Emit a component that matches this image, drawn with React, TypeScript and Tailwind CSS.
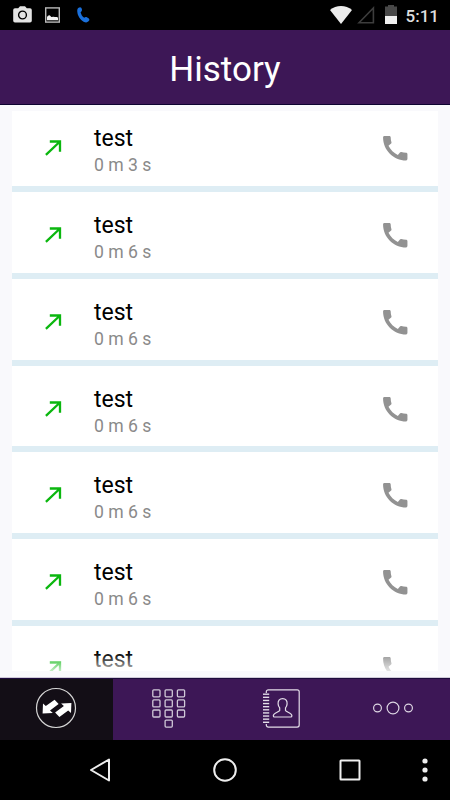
import type { ReactNode } from "react"
import { MdCall } from "react-icons/md"

type Call = { id: number; name: string; duration?: string }

const calls: Call[] = [
  { id: 1, name: "test", duration: "0 m 3 s" },
  { id: 2, name: "test", duration: "0 m 6 s" },
  { id: 3, name: "test", duration: "0 m 6 s" },
  { id: 4, name: "test", duration: "0 m 6 s" },
  { id: 5, name: "test", duration: "0 m 6 s" },
  { id: 6, name: "test", duration: "0 m 6 s" },
  { id: 7, name: "test" },
]

function StatusBar() {
  return (
    <div className="flex h-[30px] shrink-0 items-center justify-between bg-black pl-[13px] pr-[11px]">
      <div className="flex items-center pb-[1px]">
        {/* Camera */}
        <svg width="19" height="17" viewBox="0 0 19 17" fill="none">
          <path d="M2 2.200h3.200L7 .2h5l1.800 2H17A1.800 1.800 0 0 1 18.800 4v10.800a1.800 1.800 0 0 1-1.800 1.800H2a1.800 1.800 0 0 1-1.800-1.800V4A1.800 1.800 0 0 1 2 2.200z" fill="#e4e4e4" />
          <circle cx="9.500" cy="9" r="3.900" stroke="#000" strokeWidth="1.400" />
        </svg>
        {/* Picture */}
        <svg className="ml-[13px]" width="15" height="16" viewBox="0 0 15 16">
          <rect x=".7" y=".9" width="13.600" height="14.200" fill="none" stroke="#b9b9b9" strokeWidth="1.400" />
          <path d="M2 13.200V10.200C3 8.400 4.400 7.600 5.600 9.200c1.200 1.300 2 .6 2.900.6 1.300 0 2 .4 2.900.2.700-.2 1.200.1 1.600.8v2.400z" fill="#f2f2f2" />
        </svg>
        {/* Active call */}
        <svg className="ml-[16.500px]" width="13" height="16" viewBox="0 0 13 16">
          <path d="M1.600.8C3.100-.2 4.600.3 4.900 2.300c.3 1.900-.4 2.400-1.300 3 .5 2.200 1.700 4.300 3.600 5.500.9-.8 1.600-1.100 3-.4 1.900.9 2.700 2 1.900 3.200-1 1.700-3 2.300-5.100 1.300C3 12.900.6 8.500.3 4.700.1 2.600.4 1.600 1.600.8z" fill="#1a70dc" />
        </svg>
      </div>
      <div className="flex items-center">
        {/* Wifi */}
        <svg width="22" height="18" viewBox="0 0 22 18">
          <path d="M11 18 0 4C6-1.300 16-1.300 22 4z" fill="#ececec" />
        </svg>
        {/* Signal */}
        <svg className="ml-[5px]" width="18" height="18" viewBox="0 0 18 18">
          <path d="M2 16.800 16.400 2v14.800z" fill="none" stroke="#3d3d3d" strokeWidth="1.600" />
        </svg>
        {/* Battery */}
        <svg className="ml-[10px] mb-[1px]" width="12" height="19" viewBox="0 0 12 19">
          <path d="M3 0h6v1.500h3v10H0v-10h3z" fill="#484848" />
          <path d="M0 11h12v8H0z" fill="#f0f0f0" />
        </svg>
        <span className="ml-[9px] mt-[1px] text-[17px] font-medium leading-[20px] text-[#dedede]">5:11</span>
      </div>
    </div>
  )
}

function CallRow({ name, duration }: { name: string; duration?: string }) {
  return (
    <li className="flex h-[86.860px] border-b-[6px] border-[#deedf4] bg-white">
      {/* Outgoing call */}
      <svg className="ml-[33px] mt-[35px] shrink-0" width="17" height="16" viewBox="0 0 17 16" fill="none" stroke="#0bb70f" strokeWidth="2.300">
        <path d="M4.800 1.500h10.200v10.200M15 1.500.9 14.800" />
      </svg>
      <div className="ml-[32px] flex-1 pt-[22px]">
        <p className="text-[23px] leading-[23px] text-black">{name}</p>
        {duration && <p className="pt-[3px] text-[17.600px] leading-[25px] text-[#8a8a8a]">{duration}</p>}
      </div>
      <MdCall size={32.5} className="mr-[26.700px] mt-[27px] shrink-0 text-[#929292]" />
    </li>
  )
}

function Tab({ active, label, children }: { active?: boolean; label: string; children: ReactNode }) {
  return (
    <button
      aria-label={label}
      className={`flex flex-1 items-center justify-center pb-[3px] ${active ? "bg-[#130e16]" : "bg-[#3d1756]"}`}
    >
      {children}
    </button>
  )
}

const keys = [0, 1, 2, 3, 4, 5, 6, 7, 8, 10]
const rings = [0, 1, 2, 3, 4, 5, 6, 7, 8, 9]

function TabBar() {
  return (
    <div className="flex h-[62px] shrink-0 border-t border-[#1d0b3c]">
      <Tab active label="History">
        <svg width="42" height="42" viewBox="0 0 42 42" fill="#fff">
          <circle cx="21" cy="21" r="19.500" fill="none" stroke="#d5d5d5" strokeWidth="1.200" />
          <path d="M7.600 26.400 8 16.400l2.800 2.700 8.800-6.400 4 4.200-8.600 6.600 2.800 2.600z" />
          <path d="M36.400 16.100 36 26l-2.800-2.600-8.800 6.500-4.300-4.300 8.800-6.600-2.800-2.500z" />
        </svg>
      </Tab>
      <Tab label="Keypad">
        <svg width="34" height="40" viewBox="0 0 34 40" fill="none" stroke="#d0c9d8" strokeWidth="1.300">
          {keys.map((key) => (
            <rect key={key} x={0.8 + (key % 3) * 12.3} y={1.8 + Math.floor(key / 3) * 10.1} width="7.200" height="7" rx="1" />
          ))}
        </svg>
      </Tab>
      <Tab label="Contacts">
        <svg width="38" height="40" viewBox="0 0 38 40" fill="none" stroke="#e3dde8" strokeWidth="1.200">
          <path d="M4.300 4.900V3.800a2 2 0 0 1 2-2h28.900a2 2 0 0 1 2 2v33.300a2 2 0 0 1-2 2H6.300a2 2 0 0 1-2-2V36" />
          {rings.map((ring) => (
            <path key={ring} d={`M1 ${6.2 + ring * 3.12}h6.200`} strokeWidth="1.400" />
          ))}
          <path d="M20.600 10.600c-3.300 0-4.700 2.400-4.500 5.300.1 1.700.6 2.900 1.600 4v2.600c-1 1.700-6.400 2.300-6.400 5.200 0 .8.300 1.300 1.200 1.300h16.200c.9 0 1.200-.5 1.200-1.300 0-2.900-5.400-3.500-6.400-5.200v-2.600c1-1.100 1.500-2.300 1.600-4 .2-2.900-1.200-5.300-4.500-5.300z" />
        </svg>
      </Tab>
      <Tab label="More">
        <svg className="mr-[1px]" width="42" height="14" viewBox="0 0 42 14" fill="none" stroke="#ddd6e3" strokeWidth="1.200">
          <circle cx="5.500" cy="7" r="3.900" />
          <circle cx="21" cy="7" r="5.900" />
          <circle cx="36.500" cy="7" r="3.900" />
        </svg>
      </Tab>
    </div>
  )
}

function NavigationBar() {
  return (
    <div className="flex h-[60px] shrink-0 items-center bg-black pl-[89px]">
      <svg width="22" height="24" viewBox="0 0 22 24" fill="none" stroke="#eee" strokeWidth="2" strokeLinejoin="round">
        <path d="M20 1.500v21L2 12z" />
      </svg>
      <svg className="ml-[102px]" width="24" height="24" viewBox="0 0 24 24" fill="none" stroke="#eee" strokeWidth="2">
        <circle cx="12" cy="12" r="10.800" />
      </svg>
      <svg className="ml-[102px]" width="22" height="22" viewBox="0 0 22 22" fill="none" stroke="#eee" strokeWidth="2">
        <rect x="1.500" y="1.500" width="19" height="19" rx=".5" />
      </svg>
      <svg className="ml-[61px]" width="6" height="24" viewBox="0 0 6 24" fill="#eee">
        <circle cx="3" cy="3" r="2.600" />
        <circle cx="3" cy="12" r="2.600" />
        <circle cx="3" cy="21" r="2.600" />
      </svg>
    </div>
  )
}

export default function App() {
  return (
    <div className="flex h-[800px] w-[450px] flex-col overflow-hidden bg-black font-['Roboto',sans-serif]">
      <StatusBar />
      <header className="flex h-[75px] shrink-0 items-center justify-center border-b border-[#0d0330] bg-[#3d1756] pt-[5px]">
        <h1 className="text-[35px] leading-[42px] text-white">History</h1>
      </header>
      <main className="h-[573px] shrink-0 border-b border-[#cfcad8] bg-[#f9f9fc] px-[12px] pt-[6px]">
        <div className="relative h-[560px] overflow-hidden bg-white">
          <ul className="-mt-[6px]">
            {calls.map((call) => (
              <CallRow key={call.id} name={call.name} duration={call.duration} />
            ))}
          </ul>
          {/* Fade over the last visible row */}
          <div className="absolute inset-x-0 bottom-0 h-[18px] bg-gradient-to-b from-white/0 to-white/75" />
        </div>
      </main>
      <TabBar />
      <NavigationBar />
    </div>
  )
}
